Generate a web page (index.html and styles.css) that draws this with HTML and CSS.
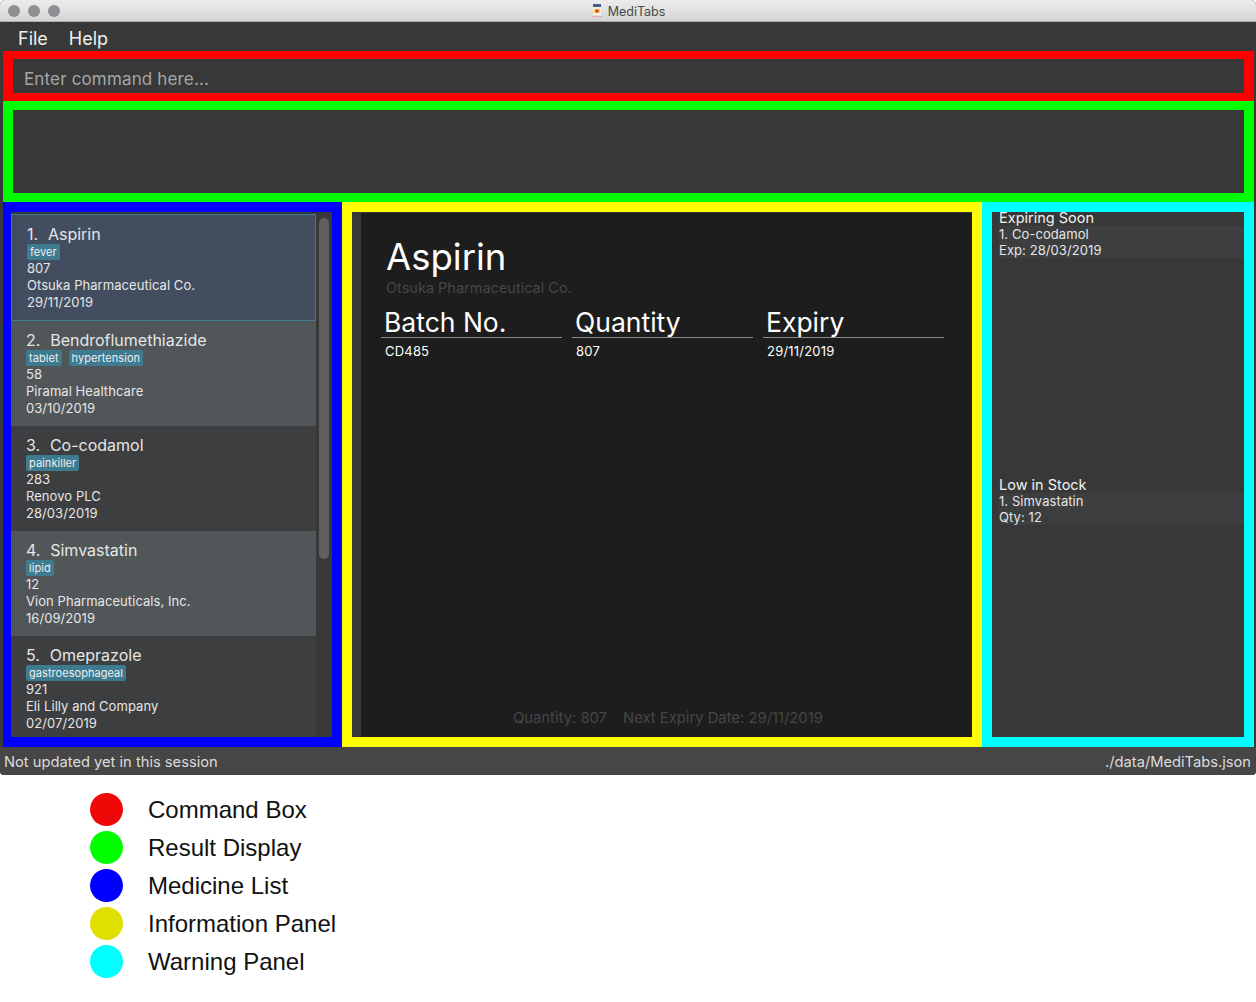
FILE: index.html
```html
<!DOCTYPE html>
<html lang="en">
<head>
  <meta charset="UTF-8" />
  <title>MediTabs</title>
  <meta name="viewport" content="width=device-width, initial-scale=1.0" />
  <link rel="stylesheet" href="styles.css">
</head>
<body>
  <div class="window">
    <div class="titlebar">
      <div class="lights"><span></span><span></span><span></span></div>
      <svg class="app-icon" width="12" height="14" viewBox="0 0 12 14">
        <rect x="2" y="0" width="8" height="3" fill="#3f5f86" />
        <rect x="2" y="3" width="8" height="8" fill="#f2f0e8" />
        <rect x="3" y="5" width="6" height="4" fill="#f4d23c" />
        <rect x="4.5" y="5.5" width="3" height="3" fill="#e8352e" />
        <rect x="1" y="12" width="10" height="1" fill="#e8a9b8" />
      </svg>
      <span class="app-name">MediTabs</span>
    </div>

    <div class="menu">
      <span>File</span>
      <span>Help</span>
    </div>

    <div class="box box-red">
      <div class="command">Enter command here...</div>
    </div>
    <div class="box box-green"></div>

    <div class="main">
      <div class="box box-blue">
        <div class="list">
          <div class="cell cell-selected">
            <div class="med-name">1.&nbsp; Aspirin</div>
            <div class="tags"><span>fever</span></div>
            <div class="line">807</div>
            <div class="line">Otsuka Pharmaceutical Co.</div>
            <div class="line">29/11/2019</div>
          </div>
          <div class="cell cell-even">
            <div class="med-name">2.&nbsp; Bendroflumethiazide</div>
            <div class="tags"><span>tablet</span><span>hypertension</span></div>
            <div class="line">58</div>
            <div class="line">Piramal Healthcare</div>
            <div class="line">03/10/2019</div>
          </div>
          <div class="cell">
            <div class="med-name">3.&nbsp; Co-codamol</div>
            <div class="tags"><span>painkiller</span></div>
            <div class="line">283</div>
            <div class="line">Renovo PLC</div>
            <div class="line">28/03/2019</div>
          </div>
          <div class="cell cell-even">
            <div class="med-name">4.&nbsp; Simvastatin</div>
            <div class="tags"><span>lipid</span></div>
            <div class="line">12</div>
            <div class="line">Vion Pharmaceuticals, Inc.</div>
            <div class="line">16/09/2019</div>
          </div>
          <div class="cell">
            <div class="med-name">5.&nbsp; Omeprazole</div>
            <div class="tags"><span>gastroesophageal</span></div>
            <div class="line">921</div>
            <div class="line">Eli Lilly and Company</div>
            <div class="line">02/07/2019</div>
          </div>
        </div>
        <div class="scroll-track"><div class="scroll-thumb"></div></div>
      </div>

      <div class="box box-yellow">
        <div class="info">
          <h1>Aspirin</h1>
          <div class="company">Otsuka Pharmaceutical Co.</div>
          <div class="columns">
            <div class="column">
              <div class="col-head">Batch No.</div>
              <div class="col-value">CD485</div>
            </div>
            <div class="column">
              <div class="col-head">Quantity</div>
              <div class="col-value">807</div>
            </div>
            <div class="column">
              <div class="col-head">Expiry</div>
              <div class="col-value">29/11/2019</div>
            </div>
          </div>
          <div class="info-footer">
            <span>Quantity: 807</span>
            <span>Next Expiry Date: 29/11/2019</span>
          </div>
        </div>
      </div>

      <div class="box box-cyan">
        <div class="warn-section">
          <div class="warn-title">Expiring Soon</div>
          <div class="warn-item">1. Co-codamol<br>Exp: 28/03/2019</div>
        </div>
        <div class="warn-section">
          <div class="warn-title">Low in Stock</div>
          <div class="warn-item">1. Simvastatin<br>Qty: 12</div>
        </div>
      </div>
    </div>

    <div class="status">
      <span>Not updated yet in this session</span>
      <span>./data/MediTabs.json</span>
    </div>
  </div>

  <div class="legend">
    <div class="legend-row"><span class="dot dot-red"></span><span class="legend-label">Command Box</span></div>
    <div class="legend-row"><span class="dot dot-green"></span><span class="legend-label">Result Display</span></div>
    <div class="legend-row"><span class="dot dot-blue"></span><span class="legend-label">Medicine List</span></div>
    <div class="legend-row"><span class="dot dot-yellow"></span><span class="legend-label">Information Panel</span></div>
    <div class="legend-row"><span class="dot dot-cyan"></span><span class="legend-label">Warning Panel</span></div>
  </div>
</body>
</html>
```

FILE: styles.css
```css
body {
  margin: 0;
  background: #fff;
  font-family: 'Inter', 'Liberation Sans', sans-serif;
  color: #e6e6e6;
}
.window {
  width: 1256px;
  height: 775px;
  background: #383838;
  border-radius: 5px 5px 4px 4px;
  overflow: hidden;
  display: flex;
  flex-direction: column;
}
.titlebar {
  position: relative;
  height: 22px;
  flex: none;
  box-sizing: border-box;
  padding-top: 1px;
  background: linear-gradient(#ececec, #d4d4d4);
  border-bottom: 1px solid #aaa;
  display: flex;
  align-items: center;
  justify-content: center;
  gap: 5px;
  color: #4a4a4a;
  font-size: 12.5px;
}
.lights {
  position: absolute;
  left: 8px;
  top: 5px;
  display: flex;
  gap: 8px;
}
.lights span {
  width: 12px;
  height: 12px;
  border-radius: 50%;
  background: #8e8e93;
}
.menu {
  height: 29px;
  flex: none;
  box-sizing: border-box;
  padding: 5px 0 0 18px;
  display: flex;
  gap: 21px;
  font-size: 18px;
  line-height: 23px;
  color: #f0f0f0;
}

/* coloured annotation frames */
.box {
  box-sizing: border-box;
  border-style: solid;
  border-width: 10px;
}
.box-red {
  height: 50px;
  margin: 0 2px 0 3px;
  flex: none;
  border-color: #ff0000;
  border-width: 8px 10px;
}
.box-green {
  height: 101px;
  margin: 0 2px 0 3px;
  flex: none;
  border-color: #00ff00;
  border-width: 9px 10px;
}
.command {
  padding: 0 0 0 11px;
  font-size: 17px;
  letter-spacing: 0.15px;
  line-height: 40px;
  color: #a6a6a6;
}
.main {
  display: flex;
  height: 545px;
  flex: none;
  margin: 0 2px 0 3px;
}
.box-blue {
  width: 339px;
  border-color: #0000ff;
  border-width: 10px 10px 10px 8px;
  position: relative;
}
.box-yellow {
  width: 640px;
  border-color: #ffff00;
  padding: 1px 0 0 9px;
}
.box-cyan {
  width: 272px;
  border-color: #00ffff;
  padding-left: 7px;
  overflow: hidden;
}

/* medicine list */
.list {
  width: 305px;
  height: 525px;
  padding-top: 2px;
  box-sizing: border-box;
  overflow: hidden;
}
.cell {
  height: 105px;
  box-sizing: border-box;
  padding: 9px 0 0 15px;
  background: #3c3e3f;
  font-size: 13px;
}
.cell-even {
  background: #515658;
}
.cell-selected {
  height: 107px;
  padding: 9px 0 0 15px;
  background: #424d5f;
  border: 1px solid #3e7b91;
}
.med-name {
  font-size: 16px;
  line-height: 21px;
  word-spacing: 0.4px;
}
.tags {
  display: flex;
  gap: 7px;
  height: 16px;
  margin-top: -1px;
}
.tags span {
  background: #3e7b91;
  border-radius: 2px;
  padding: 0 3px;
  font-size: 11px;
  letter-spacing: 0.05px;
  line-height: 16px;
  color: #eee;
}
.line {
  line-height: 17px;
  letter-spacing: 0.06px;
}
.scroll-track {
  position: absolute;
  top: 6px;
  left: 308px;
  width: 10px;
  height: 341px;
}
.scroll-thumb {
  height: 100%;
  border-radius: 5px;
  background: #5f5f5f;
}

/* information panel */
.info {
  height: 100%;
  box-sizing: border-box;
  padding: 22px 28px 0 20px;
  background: #1d1d1d;
  color: #fff;
  display: flex;
  flex-direction: column;
}
.info h1 {
  margin: 0 0 0 5px;
  font-size: 36.5px;
  font-weight: 400;
  line-height: 44px;
}
.company {
  margin-left: 5px;
  font-size: 14.5px;
  line-height: 18px;
  color: #464646;
}
.columns {
  display: flex;
  gap: 10px;
  margin-top: 10px;
}
.column {
  width: 181px;
}
.col-head {
  padding-left: 3px;
  font-size: 26.5px;
  line-height: 31px;
  border-bottom: 1px solid #8a8a8a;
  height: 30px;
  box-sizing: content-box;
}
.col-value {
  padding-left: 4px;
  margin-top: 5px;
  font-size: 13px;
  letter-spacing: 0.2px;
  line-height: 17px;
}
.info-footer {
  margin-top: auto;
  padding: 0 0 10px 132px;
  display: flex;
  gap: 16px;
  font-size: 14.8px;
  line-height: 18px;
  color: #464646;
}

/* warning panel */
.warn-section {
  height: 267px;
  font-size: 13px;
  letter-spacing: 0.08px;
}
.warn-section:first-child {
  margin-top: -2px;
}
.warn-title {
  font-size: 14.5px;
  letter-spacing: 0;
  line-height: 16px;
  color: #f2f2f2;
}
.warn-item {
  background: #3c3e3f;
  line-height: 16px;
}

.status {
  flex: 1;
  background: #464646;
  padding: 1px 5px 0 4px;
  display: flex;
  justify-content: space-between;
  align-items: center;
  font-size: 14.7px;
  color: #dcdcdc;
}

/* legend below the window */
.legend {
  padding: 15px 0 0 90px;
  font-family: 'Liberation Sans', Arial, sans-serif;
  font-size: 24px;
  color: #111;
}
.legend-row {
  height: 38px;
  display: flex;
  align-items: center;
  gap: 25px;
}
.legend-label {
  padding-top: 2px;
}
.dot {
  width: 33px;
  height: 33px;
  border-radius: 50%;
}
.dot-red { background: #f00808; }
.dot-green { background: #00ff00; }
.dot-blue { background: #0000ff; }
.dot-yellow { background: #e0e000; }
.dot-cyan { background: #00ffff; }
```
